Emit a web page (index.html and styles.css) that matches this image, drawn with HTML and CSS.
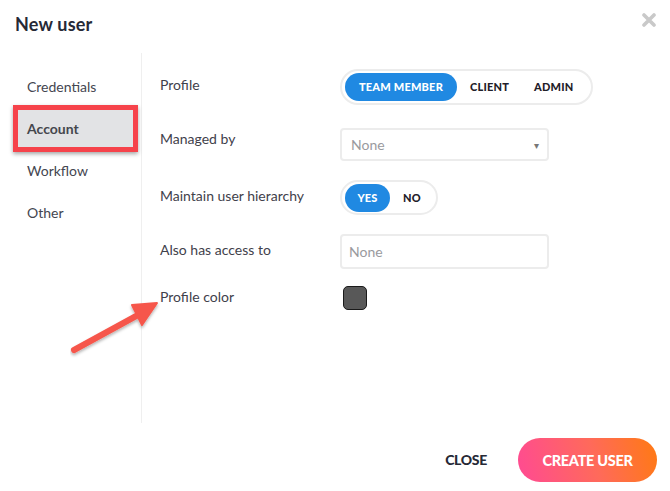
FILE: index.html
```html
<!DOCTYPE html>
<html>
<head>
<meta charset="utf-8">
<link rel="stylesheet" href="styles.css">
</head>
<body>
<div class="modal">
  <header class="header">
    <h1 class="title">New user</h1>
    <svg class="close-x" width="14" height="14" viewBox="0 0 14 14"><path d="M2 2 L12 12 M12 2 L2 12" stroke="#c9c9c9" stroke-width="3.6" stroke-linecap="round"/></svg>
  </header>
  <div class="main">
    <nav class="sidebar">
      <div class="nav-item">Credentials</div>
      <div class="nav-item active">Account</div>
      <div class="nav-item">Workflow</div>
      <div class="nav-item">Other</div>
    </nav>
    <section class="content">
      <div class="row row-profile">
        <div class="label">Profile</div>
        <div class="seg">
          <span class="seg-opt on">TEAM MEMBER</span>
          <span class="seg-opt">CLIENT</span>
          <span class="seg-opt">ADMIN</span>
        </div>
      </div>
      <div class="row row-managed">
        <div class="label">Managed by</div>
        <div class="field select"><span>None</span><span class="caret">&#9662;</span></div>
      </div>
      <div class="row row-hier">
        <div class="label">Maintain user hierarchy</div>
        <div class="seg">
          <span class="seg-opt on yes">YES</span>
          <span class="seg-opt no">NO</span>
        </div>
      </div>
      <div class="row row-access">
        <div class="label">Also has access to</div>
        <div class="field input"><span>None</span></div>
      </div>
      <div class="row row-color">
        <div class="label">Profile color</div>
        <div class="swatch"></div>
      </div>
    </section>
  </div>
  <footer class="footer">
    <button class="btn-close">CLOSE</button>
    <button class="btn-create">CREATE USER</button>
  </footer>
  <svg class="arrow" width="100" height="60" viewBox="0 0 100 60">
    <defs>
      <filter id="sh" x="-20%" y="-20%" width="140%" height="140%">
        <feDropShadow dx="0" dy="2" stdDeviation="1.5" flood-color="#000" flood-opacity="0.3"/>
      </filter>
    </defs>
    <g filter="url(#sh)" fill="#f6574b" stroke="#f6574b">
      <line x1="4" y1="50" x2="68" y2="15" stroke-width="6" stroke-linecap="round"/>
      <polygon points="87,3 62,5 72,25" stroke-width="2" stroke-linejoin="round"/>
    </g>
  </svg>
</div>
</body>
</html>
```

FILE: styles.css
```css
* { box-sizing: border-box; }
html, body { margin: 0; padding: 0; background: #fff; }
body {
  font-family: Lato, "Open Sans", sans-serif;
  width: 670px;
  height: 491px;
  overflow: hidden;
}
.modal {
  position: relative;
  width: 670px;
  height: 491px;
  display: flex;
  flex-direction: column;
}
.header {
  height: 53px;
  display: flex;
  justify-content: space-between;
  align-items: flex-start;
  padding: 0 14px 0 15px;
}
.title {
  margin: 13px 0 0 0;
  font-size: 18px;
  line-height: 22px;
  font-weight: 700;
  color: #262936;
  letter-spacing: 0.2px;
}
.close-x { margin-top: 13px; }
.main {
  height: 370px;
  display: flex;
}
.sidebar {
  width: 142px;
  border-right: 1px solid #efefef;
  padding: 13px 0 0 18px;
}
.nav-item {
  position: relative;
  width: 115px;
  height: 42px;
  line-height: 42px;
  padding-left: 9px;
  font-size: 14px;
  color: #444650;
}
.nav-item.active {
  background: #e2e3e5;
  font-weight: 700;
  color: #45474d;
}
.nav-item.active::after {
  content: "";
  position: absolute;
  left: -5px;
  right: -5px;
  top: -3px;
  bottom: -2px;
  border: 5px solid #f6434b;
  box-shadow: 0 2px 4px rgba(0,0,0,0.35);
}
.content {
  flex: 1;
  padding: 16px 0 0 18px;
}
.row {
  display: flex;
  align-items: flex-start;
}
.label {
  width: 180px;
  font-size: 14px;
  line-height: 20px;
  color: #3f414b;
}
.row-profile .label { padding-top: 6px; }
.row-managed { margin-top: 23px; }
.row-managed .label { padding-top: 1px; }
.row-hier { margin-top: 19px; }
.row-hier .label { padding-top: 6px; }
.row-access { margin-top: 19px; }
.row-access .label { padding-top: 6px; }
.row-color { margin-top: 17px; }
.row-color .label { padding-top: 1px; }

.seg {
  display: flex;
  align-items: center;
  height: 36px;
  padding: 0 3px;
  border: 2px solid #ececec;
  border-radius: 18px;
  background: #fff;
}
.seg-opt {
  height: 28px;
  line-height: 28px;
  padding: 0 13px;
  font-size: 11px;
  font-weight: 900;
  color: #1f2029;
  border-radius: 14px;
  letter-spacing: 0.2px;
}
.seg-opt.on {
  background: #2089e2;
  color: #fff;
}
.row-profile .seg { width: 253px; }
.row-profile .seg-opt.on { width: 112px; padding: 0; text-align: center; }
.row-profile .seg-opt:nth-child(2) { padding: 0 12px 0 13px; }
.row-hier .seg { width: 98px; height: 35px; }
.row-hier .seg-opt.yes { width: 45px; padding: 0; text-align: center; }
.row-hier .seg-opt.no { padding: 0 0 0 13px; }

.field {
  width: 209px;
  border: 2px solid #ececec;
  border-radius: 4px;
  font-size: 14px;
  color: #9a9a9e;
  display: flex;
  align-items: center;
  justify-content: space-between;
}
.select { height: 33px; padding: 0 8px 0 9px; }
.input { height: 35px; padding: 0 8px 0 7px; }
.caret { font-size: 10px; color: #777; }
.swatch {
  margin-left: 3px;
  width: 24px;
  height: 24px;
  border-radius: 5px;
  background: #585858;
  border: 1.5px solid #1a1a1a;
}
.footer {
  flex: 1;
  display: flex;
  justify-content: flex-end;
  align-items: flex-start;
  padding: 15px 13px 0 0;
  gap: 31px;
}
.btn-close, .btn-create {
  font-family: Lato, "Open Sans", sans-serif;
  font-weight: 900;
  border: none;
  cursor: pointer;
}
.btn-close {
  margin-top: 11px;
  background: none;
  font-size: 14px;
  color: #262936;
  padding: 0;
  line-height: 22px;
  letter-spacing: -0.3px;
}
.btn-create {
  width: 139px;
  height: 44px;
  border-radius: 22px;
  background: linear-gradient(75deg, #ff4a93 0%, #ff6a5a 55%, #ff7a12 100%);
  color: #fff;
  font-size: 14.5px;
  letter-spacing: -0.3px;
}
.arrow {
  position: absolute;
  left: 70px;
  top: 300px;
}
```
